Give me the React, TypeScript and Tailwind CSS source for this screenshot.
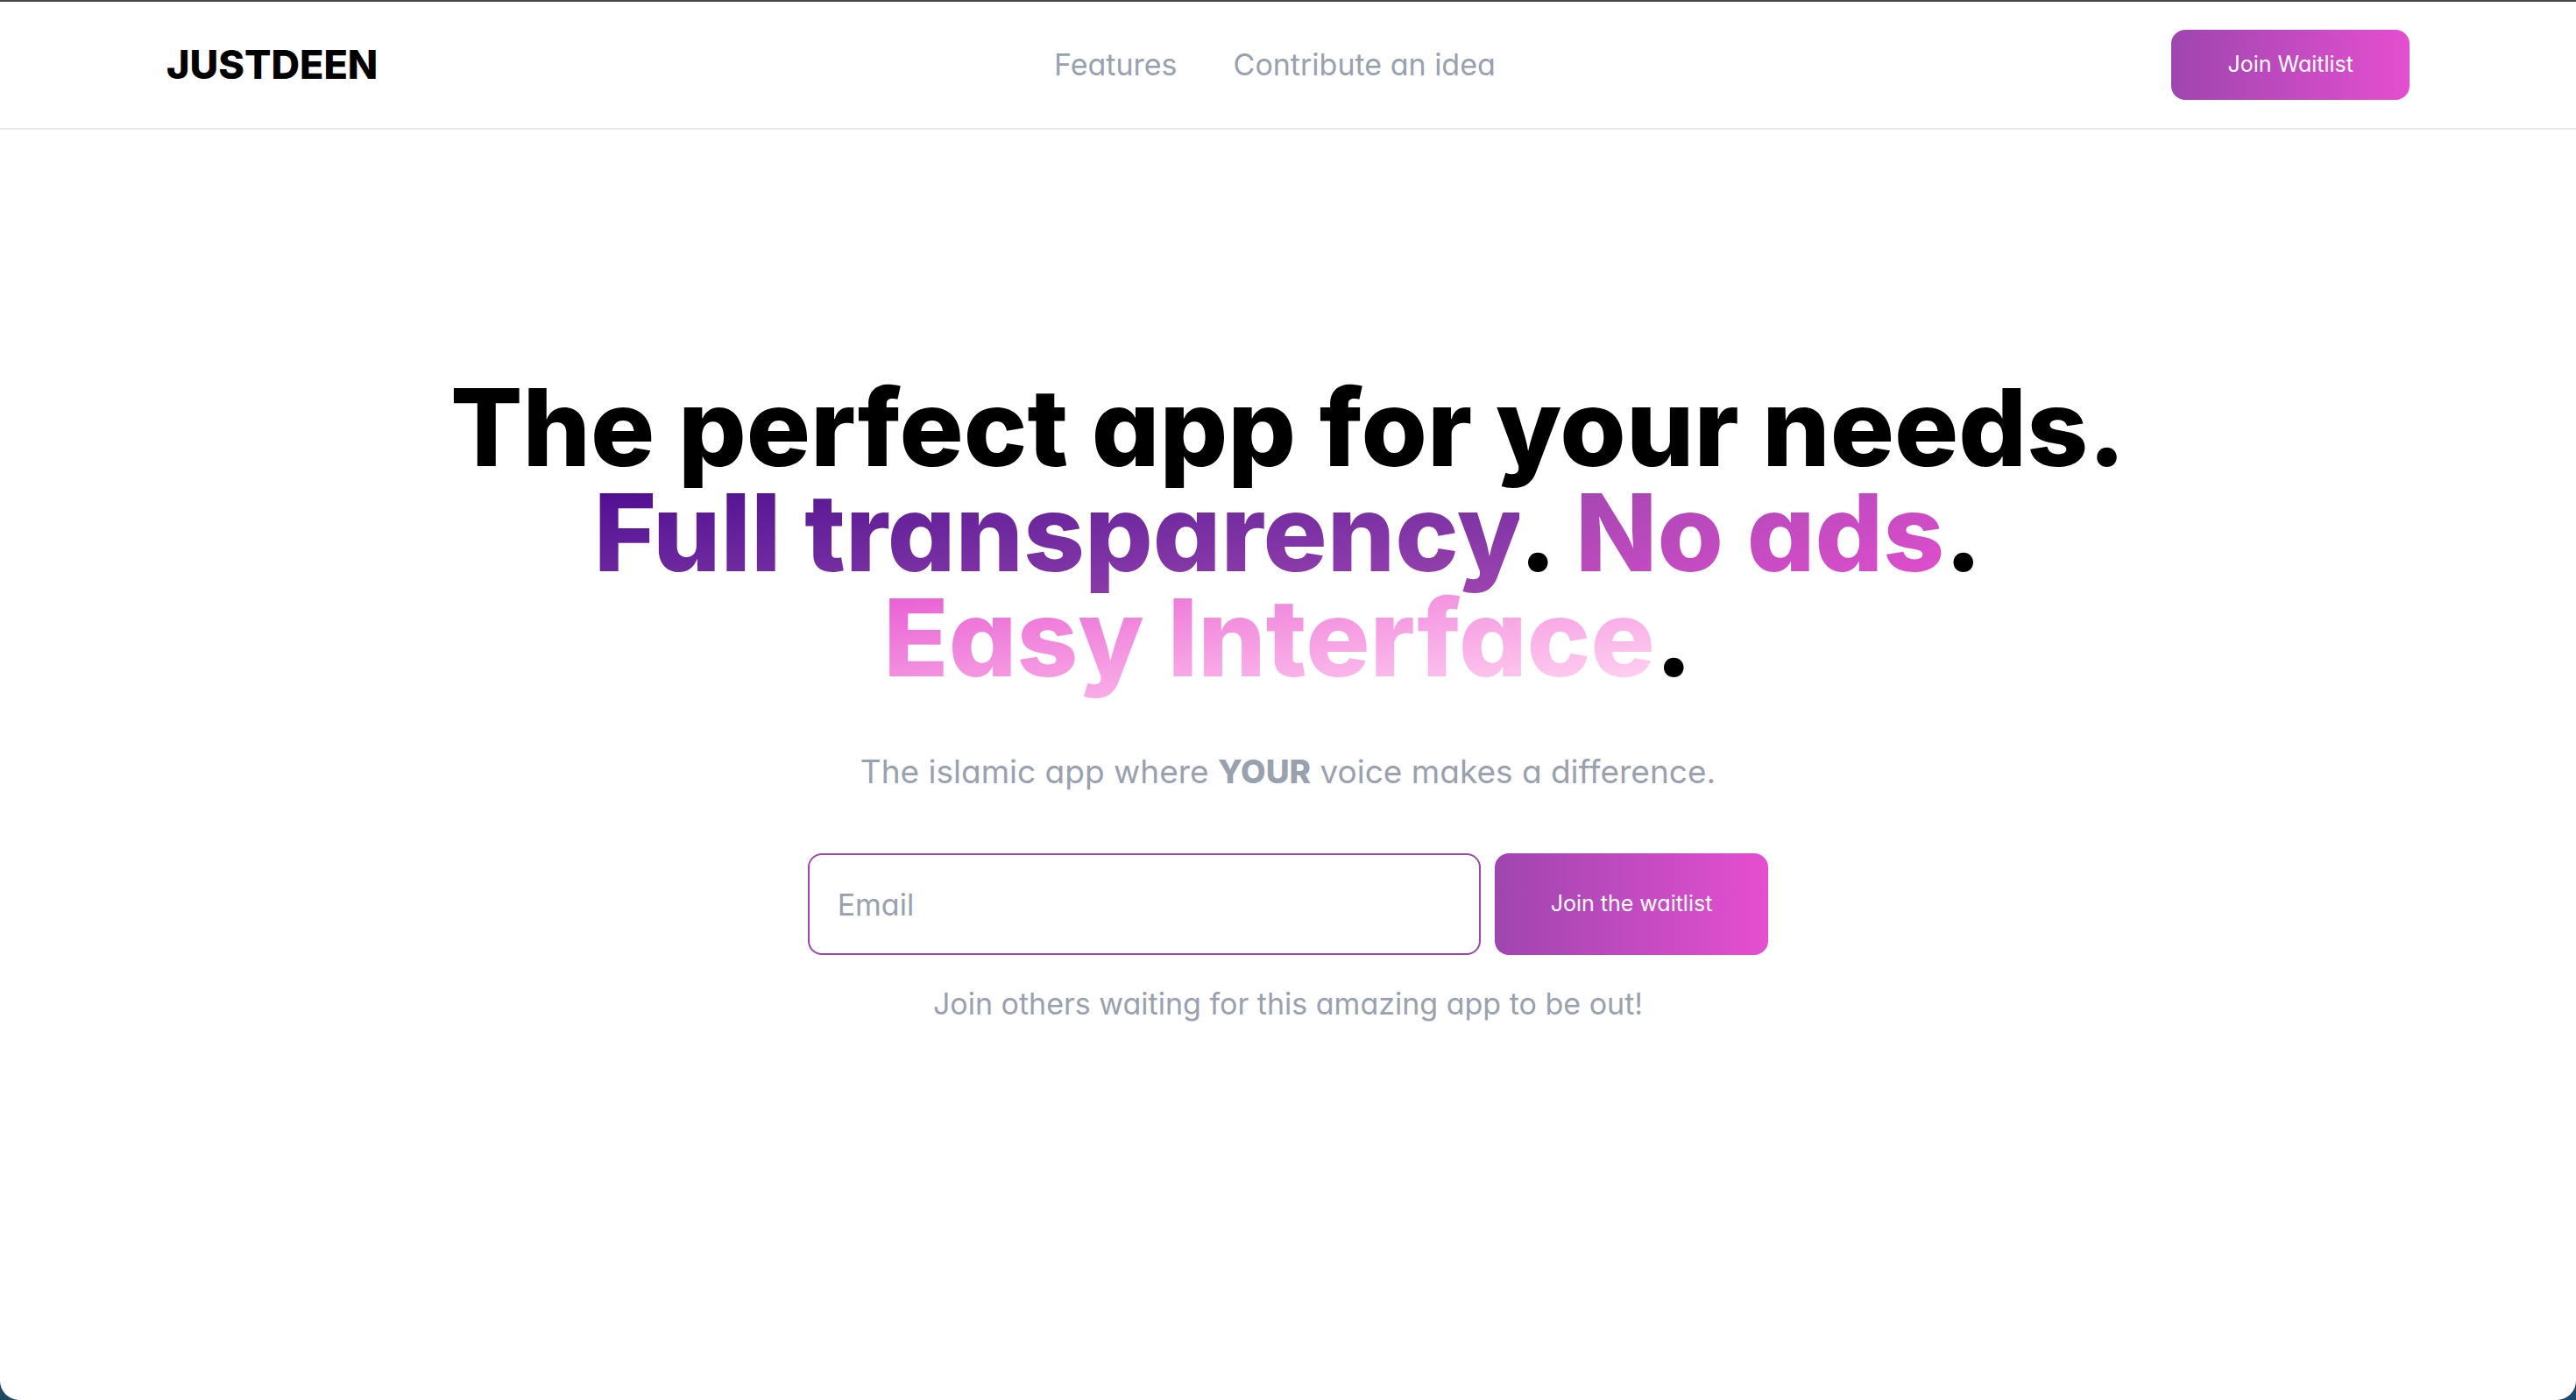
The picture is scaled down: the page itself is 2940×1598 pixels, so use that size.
const links = ["Features", "Contribute an idea"];

const gradientButton =
  "shrink-0 cursor-pointer rounded-2xl bg-linear-to-r from-[#9f45b0] to-[#e54ed0] px-16 text-[25px] text-white";

export default function App() {
  return (
    <div className="min-h-screen bg-[linear-gradient(to_right,#1f4a61,#1d4a6b)]">
      <div className="flex min-h-screen flex-col rounded-b-[22px] border-t-2 border-[#474545] bg-white font-['Inter',sans-serif] text-black [font-feature-settings:'cv11']">
        <header className="border-b-2 border-gray-200 px-8 py-8">
          <div className="mx-auto flex max-w-[2560px] items-center justify-between">
            <a href="#" className="text-[45px] leading-[64px] font-extrabold">
              JUSTDEEN
            </a>
            <nav className="flex gap-16 text-[34px] leading-[48px] text-gray-400">
              {links.map((link) => (
                <a key={link} href="#">
                  {link}
                </a>
              ))}
            </nav>
            <button type="button" className={`${gradientButton} h-20`}>
              Join Waitlist
            </button>
          </div>
        </header>

        <main className="flex flex-col items-center px-8 pt-[280px] text-center">
          <h1 className="text-[122px] leading-[120px] font-extrabold">
            The perfect app for your needs.
            <br />
            <span className="bg-linear-to-br from-[#4a008f] to-[#9f45b0] bg-clip-text text-transparent">
              Full transparency
            </span>
            .{" "}
            <span className="bg-linear-to-br from-[#9f45b0] to-[#e54ed0] bg-clip-text text-transparent">
              No ads
            </span>
            .
            <br />
            <span className="bg-linear-to-br from-[#e54ed0] to-[#ffdcf2] bg-clip-text text-transparent">
              Easy Interface
            </span>
            .
          </h1>
          <p className="mt-16 text-[37px] leading-[58px] text-gray-400">
            The islamic app where <strong className="font-extrabold">YOUR</strong> voice makes a
            difference.
          </p>
          <form className="mt-16 flex gap-4" onSubmit={(e) => e.preventDefault()}>
            <input
              type="email"
              aria-label="Email"
              placeholder="Email"
              className="h-[116px] w-[768px] rounded-2xl border-2 border-[#9f45b0] px-8 text-[34px] outline-none placeholder:text-gray-400"
            />
            <button type="submit" className={gradientButton}>
              Join the waitlist
            </button>
          </form>
          <p className="mt-8 text-[34px] leading-[48px] text-gray-400">
            Join others waiting for this amazing app to be out!
          </p>
        </main>
      </div>
    </div>
  );
}
